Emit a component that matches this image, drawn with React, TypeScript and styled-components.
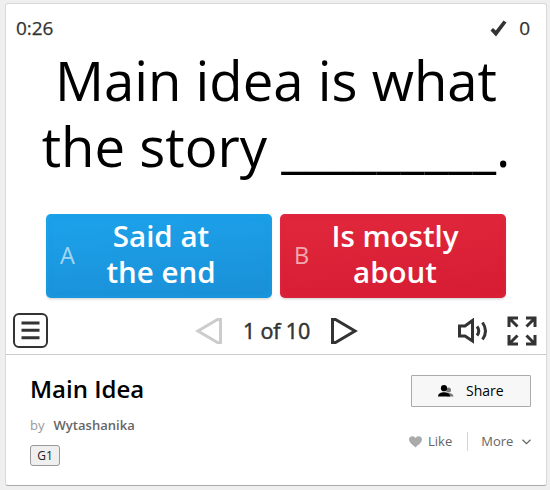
import React from "react";
import styled, { createGlobalStyle } from "styled-components";

const GlobalStyle = createGlobalStyle`
  * { box-sizing: border-box; }
  body { margin: 0; background: #efefef; font-family: "Open Sans", "Noto Sans", sans-serif; }
  button { font-family: inherit; padding: 0; margin: 0; }
  svg { display: block; flex: none; }
`;

const Page = styled.main`
  height: 490px;
  padding: 3px 3px 4px 5px;
  overflow: hidden;
`;

const Card = styled.article`
  height: 483px;
  border: 1px solid #d9d9d9;
  border-bottom: 1px solid #aaa;
  border-radius: 3px;
  background: #fff;
`;

const Game = styled.section`
  height: 351px;
  border-bottom: 1px solid #ccc;
  color: #333;
`;

const StatusBar = styled.header`
  height: 43px;
  padding: 10px 16px 0 10px;
  display: flex;
  justify-content: space-between;
  font-size: 19px;
  letter-spacing: -0.1px;
  -webkit-text-stroke: 0.25px #333;
  line-height: 28px;
`;

const Score = styled.div`
  display: flex;
  gap: 12px;
  svg { margin-top: 6px; }
`;

const Question = styled.h1`
  margin: 0;
  height: 167px;
  color: #000;
  font-size: 54.5px;
  font-weight: 400;
  line-height: 66px;
  text-align: center;
  white-space: nowrap;
`;

const Answers = styled.div`
  display: flex;
  gap: 8px;
  padding-left: 40px;
`;

const Answer = styled.button<{ $tone: "blue" | "red" }>`
  width: 226px;
  height: 84px;
  display: flex;
  align-items: center;
  border: 0;
  border-radius: 5px;
  color: #fff;
  background: ${(p) =>
    p.$tone === "blue"
      ? "linear-gradient(175deg, #1ca0e8 15%, #1a91d9 90%)"
      : "linear-gradient(175deg, #df263a 15%, #d71d34 90%)"};
  box-shadow: 0 2px 3px -1px #0003,
    inset 0 0 5px 1px ${(p) => (p.$tone === "blue" ? "#18a8e580" : "#e4294780")};
`;

const Letter = styled.span`
  width: 44px;
  padding-left: 14px;
  margin-top: -3px;
  text-align: left;
  font-size: 23.5px;
  line-height: 32px;
  opacity: 0.6;
`;

const AnswerText = styled.span`
  width: 142px;
  text-align: center;
  font-size: 29.5px;
  font-weight: 600;
  line-height: 35.5px;
  white-space: nowrap;
  margin-top: -5px;
`;

const Controls = styled.nav`
  height: 53px;
  display: flex;
  align-items: center;
  padding: 12px 9px 0 7px;
`;

const MenuButton = styled.button`
  width: 35px;
  height: 35px;
  display: grid;
  place-items: center;
  border: 2px solid #333;
  border-radius: 6px;
  background: #fff;
`;

const Pager = styled.div`
  margin-left: 147px;
  display: flex;
  align-items: center;
  gap: 20px;
  font-size: 21.5px;
  letter-spacing: -0.15px;
  -webkit-text-stroke: 0.5px #333;
  line-height: 30px;
  white-space: nowrap;
`;

const PageLabel = styled.span`
  width: 69px;
  text-align: center;
`;

const ViewTools = styled.div`
  margin-left: auto;
  display: flex;
  align-items: center;
  gap: 19px;
`;

const Details = styled.section`
  display: flex;
  justify-content: space-between;
  padding: 20px 14px 0 24px;
`;

const Title = styled.h2`
  margin: -1px 0 0;
  color: #000;
  font-size: 24px;
  font-weight: 600;
  line-height: 30px;
`;

const Author = styled.p`
  margin: 12px 0 11px;
  display: flex;
  gap: 9px;
  font-size: 13px;
  line-height: 18px;
  color: #999;
  strong { color: #666; font-weight: 600; letter-spacing: 0.03px; }
`;

const Tag = styled.span`
  display: block;
  width: 30px;
  height: 21px;
  border: 1px solid #999;
  border-radius: 3px;
  background: #efefef;
  color: #222;
  font-size: 12px;
  line-height: 19px;
  text-align: center;
`;

const Actions = styled.div`
  width: 121px;
`;

const ShareButton = styled.button`
  width: 120px;
  height: 32px;
  display: flex;
  align-items: center;
  gap: 12px;
  padding: 0 0 1px 26px;
  border: 1px solid #aaa;
  border-radius: 1px;
  background: #f7f7f7;
  color: #000;
  font-size: 14px;
  svg { margin-top: 1px; }
`;

const LinkRow = styled.div`
  margin: 25px 0 0 -2px;
  height: 19px;
  display: flex;
  align-items: center;
  font-size: 13px;
  line-height: 18px;
  color: #666;
`;

const Link = styled.span<{ $gap: number }>`
  display: flex;
  align-items: center;
  gap: ${(p) => p.$gap}px;
  margin-top: -2px;
  svg { margin-top: 2px; }
`;

const Separator = styled.span`
  width: 1px;
  height: 19px;
  margin: 0 13px 0 15px;
  background: #d5d5d5;
`;

const Arrow = ({ back = false }: { back?: boolean }) => (
  <svg width="27" height="28" viewBox="0 0 27 28" fill="none" stroke={back ? "#ccc" : "#333"} strokeWidth="3">
    <path d={back ? "M25.5 2.5v23h-3L3 14 22.5 2.5z" : "M1.5 2.5v23h3L24 14 4.500 2.500z"} />
  </svg>
);

export default function App() {
  return (
    <Page>
      <GlobalStyle />
      <Card>
        <Game>
          <StatusBar>
            <span>0:26</span>
            <Score>
              <svg width="17" height="17" viewBox="0 0 17 17">
                <path d="M.5 10.500 3 8 5.800 10.500 13.500.5 16.500 2.500 6 16.500z" fill="#333" />
              </svg>
              <span>0</span>
            </Score>
          </StatusBar>
          <Question>
            Main idea is what<br />the story _________.
          </Question>
          <Answers>
            <Answer $tone="blue">
              <Letter>A</Letter>
              <AnswerText>Said at<br />the end</AnswerText>
            </Answer>
            <Answer $tone="red">
              <Letter>B</Letter>
              <AnswerText>Is mostly<br />about</AnswerText>
            </Answer>
          </Answers>
          <Controls>
            <MenuButton aria-label="Menu">
              <svg width="19" height="19" viewBox="0 0 19 19" stroke="#333" strokeWidth="3">
                <path d="M.5 2h18M.5 9.300h18M.5 16.700h18" />
              </svg>
            </MenuButton>
            <Pager>
              <Arrow back />
              <PageLabel>1 of 10</PageLabel>
              <Arrow />
            </Pager>
            <ViewTools>
              <svg width="30" height="26" viewBox="0 0 30 26" fill="none" stroke="#333" strokeWidth="3">
                <path d="M1.500 8h5.500l7.500-5.500v20.500L7 18H1.500z" />
                <path d="M19 8.500q3.500 4.500 0 9M24.500 4.500q6 8.500 0 17" />
              </svg>
              <svg width="30" height="30" viewBox="0 0 30 30" fill="none" stroke="#333" strokeWidth="3">
                <path d="M2 11V2h9M2 2l8.500 8.500M19 2h9v9M28 2l-8.500 8.500M2 19v9h9M2 28l8.500-8.500M28 19v9h-9M28 28l-8.500-8.500" />
              </svg>
            </ViewTools>
          </Controls>
        </Game>
        <Details>
          <div>
            <Title>Main Idea</Title>
            <Author>by <strong>Wytashanika</strong></Author>
            <Tag>G1</Tag>
          </div>
          <Actions>
            <ShareButton>
              <svg width="16" height="12" viewBox="0 0 16 12">
                <g fill="#777"><circle cx="10.500" cy="5" r="2.500" /><path d="M9 11.500V8q6-.5 6.500 3.500z" /></g>
                <circle cx="6" cy="3.200" r="3.100" />
                <path d="M0 11.500C0 8.500 3 7.200 6 7.200s6 1.300 6 4.300z" />
              </svg>
              Share
            </ShareButton>
            <LinkRow>
              <Link $gap={6}>
                <svg width="13" height="12" viewBox="0 0 13 12">
                  <path d="M6.500 11.500C4 9 0 6.500 0 3.500 0 0 4.500-1 6.500 2 8.500-1 13 0 13 3.500c0 3-4 5.500-6.500 8z" fill="#aaa" />
                </svg>
                Like
              </Link>
              <Separator />
              <Link $gap={9}>
                More
                <svg width="9" height="6" viewBox="0 0 9 6" fill="none" stroke="#666" strokeWidth="1.300">
                  <path d="m.5.7 4 4 4-4" />
                </svg>
              </Link>
            </LinkRow>
          </Actions>
        </Details>
      </Card>
    </Page>
  );
}
